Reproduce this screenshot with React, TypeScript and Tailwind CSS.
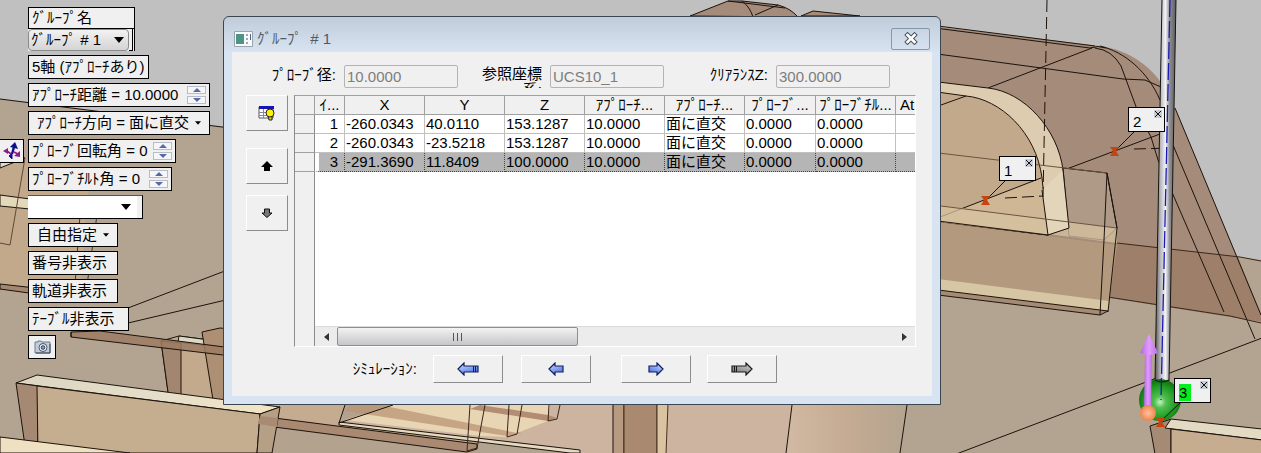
import type { ReactNode } from "react";

const box = "border border-black bg-[#f0f0f0]";
const raised =
  "flex items-center justify-center border border-t-white border-l-white border-r-[#8c8c8c] border-b-[#8c8c8c] bg-[#f0f0f0]";
const field =
  "h-[23px] w-[114px] rounded-xs border border-[#b4b4b4] bg-[#f0f0f0] px-0.5 text-[#7d7d7d] outline-none";

function Scene() {
  return (
    <svg className="absolute inset-0 h-full w-full" aria-hidden="true">
      <defs>
        <linearGradient id="rod" x1="0" x2="1">
          <stop offset="0" stopColor="#555" />
          <stop offset="0.25" stopColor="#b5b5b8" />
          <stop offset="0.5" stopColor="#f2f2f8" />
          <stop offset="0.7" stopColor="#8e8e92" />
          <stop offset="1" stopColor="#5c5c5c" />
        </linearGradient>
        <radialGradient id="ball" cx="0.5" cy="0.55" r="0.55">
          <stop offset="0" stopColor="#c4f5c4" />
          <stop offset="0.25" stopColor="#52c052" />
          <stop offset="0.7" stopColor="#1f9a22" />
          <stop offset="1" stopColor="#0c6c10" />
        </radialGradient>
        <radialGradient id="knob">
          <stop offset="0" stopColor="#ffc49c" />
          <stop offset="1" stopColor="#ee8450" />
        </radialGradient>
        <linearGradient id="bend" x1="0" x2="1">
          <stop offset="0" stopColor="#d2b9a3" />
          <stop offset="0.5" stopColor="#c5ab92" />
          <stop offset="1" stopColor="#b3a490" />
        </linearGradient>
        <linearGradient id="shaft" x1="0" x2="1">
          <stop offset="0" stopColor="#b266e0" />
          <stop offset="0.5" stopColor="#e29cff" />
          <stop offset="1" stopColor="#b870e4" />
        </linearGradient>
        <linearGradient id="rim" x1="0" x2="1">
          <stop offset="0" stopColor="#dcd6c2" />
          <stop offset="0.6" stopColor="#e6dfc9" />
          <stop offset="1" stopColor="#f3e6c3" />
        </linearGradient>
      </defs>
      <rect width="100%" height="100%" fill="#c0c0c0" />
      <path d="M0 99L230 128L1240 257L3000 480V2000H0Z" fill="#b3a491" />

      <g stroke="#1c130c" strokeWidth="1" fill="none">
        <path d="M0 99L230 128" />
        <path d="M0 168L24 159L90 168L80 293L0 284Z" fill="#c3a98c" stroke="none" />
        <path d="M0 195L60 203V212L0 206Z" fill="#e3d8ba" />
        <path d="M0 161L25 158L0 168Z" fill="#dfdccf" />
        <path d="M25 158L10 245L0 243" stroke="#5e4a38" />
        <path d="M0 284L80 293V300L0 289Z" fill="#a5876f" />
        <path d="M80 215L75 285M97 215L87 285" stroke="#4b3525" />
        <path d="M128 308L230 269M128 323L230 299" />
        <path d="M161 341L179 336L240 344V422L171 414Z" fill="#c3aa8d" />
        <path d="M161 341L181 343V407L171 414Z" fill="#a3866f" />
        <path d="M179 336L240 344V350L178 342Z" fill="#dcd8c6" />
        <path d="M202 332L220 328L240 330V403L213 400Z" fill="#ad8f73" />
        <path d="M71 332L100 331L240 349V357L71 337Z" fill="#9c7b62" fillOpacity="0.85" />
        <path d="M171 406L240 414V422L171 414Z" fill="#ad8f75" stroke="none" />
        <path d="M71 332V337" />
      </g>

      <g stroke="#1c130c" fill="none">
        <path d="M340 405H792L786 453H580L339 423Z" fill="#ccb4a1" stroke="none" />
        <path d="M265 405H400L340 422L480 440V453H265Z" fill="#b3a28e" stroke="none" />
        <path d="M270 405H345L339 423L470 440V450L270 422Z" fill="#c5ab8f" stroke="none" />
        <path d="M393 405H550L548 421L507 437L480 436L345 420Z" fill="#e8d5b3" stroke="none" />
        <path d="M350 405L345 411L507 436L517 434V431L522 434L380 405Z" fill="#b99473" fillOpacity="0.75" stroke="none" />
        <path d="M480 405L548 415L557 418L548 421L470 409Z" fill="#b28c73" stroke="none" />
        <path d="M220 411L477 444V449L467 452L220 420Z" fill="#a98972" />
        <path d="M339 422L580 450V453H570L339 425Z" fill="#e5dac0" />
        <path d="M345 405L339 423L393 405" />
        <path d="M470 405L467 451L477 448L485 405M509 405L507 437L517 434L522 405M549 405L548 421L557 419L560 405" stroke="#3a2518" />
        <path d="M37 375L280 407L260 414L16 383Z" fill="url(#rim)" />
        <path d="M16 383L38 386V453H26Z" fill="#a58972" />
        <path d="M37 386L260 414L257 453H38Z" fill="#c5ad90" />
        <path d="M260 414L280 407L272 453H257Z" fill="#b5a085" />
        <path d="M260 416L278 418L277 427L258 424Z" fill="#a98b73" stroke="none" />
        <path d="M0 437L130 453H38L26 453H0Z" fill="#eee0c0" />
        <path d="M613 404H624V454H613Z" fill="#b89a80" />
        <path d="M624 404H657V454H624Z" fill="#a98a71" stroke="#49301f" />
        <path d="M657 404H668L666 454H657Z" fill="#d9c3a1" stroke="#49301f" />
        <path d="M792 405H907L900 453H786Z" fill="url(#bend)" stroke="none" />
        <path d="M792 405L786 453M907 405L900 453" />
      </g>

      <g stroke="#1c130c" fill="none">
        <path d="M690 16L728 1L742 1L778 5Q790 8 798 17Z" fill="#a58b79" />
        <path d="M742 1Q750 7 753 17M755 15L778 5M728 1L785 8" />
        <path d="M801 16L813 11L860 16Z" fill="#a58b79" />

        <path d="M930 26L1100 46C1130 50 1152 68 1162 84L1175 108L1262 317V322L1110 298L930 275Z" fill="#a58b7a" stroke="none" />
        <path d="M1117 243L1238 257L1262 317V322L1110 298Z" fill="#9e806a" stroke="none" />
        <path d="M930 25L1095 46M935 28L1090 48M1090 48Q1098 45 1106 48M1095 48Q1112 50 1121 66L1138 112L1151 137L1158 160L1224 312" />
        <path d="M1100 46C1125 52 1148 72 1160 100M1175 108L1261 315" />
        <path d="M930 53L1123 79L1145 80L1161 87M988 88L1092 48M1064 170L1160 134M1173 145L1255 339" />
        <path d="M1117 243L1240 257L1261 261M1108 297L1230 316L1261 323" stroke="#3b271b" />

        <path d="M930 81L988 88C1025 92 1058 130 1063 170L1069 228L1048 235L930 221Z" fill="#deccb0" />
        <path d="M930 91L966 96C1000 99 1036 132 1042 178L1048 235L930 221Z" fill="#c3a98b" />
        <path d="M930 221L1041 178L1048 235Z" fill="#cfb795" stroke="none" />
        <path d="M941 105L966 96M935 219L1041 178" />
        <path d="M1063 168L1107 173L1117 228L1104 240L1069 236Z" fill="#ae9a86" />
        <path d="M930 221L1117 245L1109 302L930 280Z" fill="#b39a7e" stroke="none" />
        <path d="M930 204L1117 228V243L930 219Z" fill="#d7c3a0" fillOpacity="0.75" stroke="none" />
        <path d="M1042 190L1063 170L1069 228L1048 235Z" fill="#e3d5ba" stroke="none" />
        <path d="M1042 190L1048 235L1069 228L1063 170M930 220L1048 235" />
        <path d="M930 152L1107 173M941 206L1117 228" stroke="#6b5341" />
        <path d="M930 278L1109 301L1108 311L1100 315L930 294Z" fill="#d7c6a4" stroke="none" />
        <path d="M930 289L1108 311L1100 315L930 294Z" fill="#a58b74" />
        <path d="M1107 173L1117 228L1108 312" />
        <path d="M1107 173L1104 240L1100 315" />
        <path d="M930 464L1262 338" />
        <path d="M1047 0L1043 197M1005 198L1043 196M1134 149L1173 148" strokeDasharray="12 5" />
        <path d="M1150 426L1171 419V454H1155Z" fill="#a58a74" />
        <path d="M1171 419L1262 429V440L1165 428Z" fill="#e3dac3" />
        <path d="M1171 429L1262 440V454H1171Z" fill="#c6ad8f" />
      </g>

      <path d="M1162 -1H1176L1169 381H1155Z" fill="url(#rod)" stroke="#151515" />
      <circle cx="1160" cy="400" r="21" fill="url(#ball)" />
      <path d="M1155 380Q1162 384 1169 380" stroke="#111" fill="none" />
      <path d="M1170 0L1161 400" stroke="#1b1bb4" strokeWidth="1.3" strokeDasharray="17 4" />
      <path d="M1145 352H1152L1151 408H1144Z" fill="url(#shaft)" />
      <path d="M1149 334L1158 353Q1149 357 1140 353Z" fill="url(#shaft)" />
      <circle cx="1148" cy="413" r="8" fill="url(#knob)" />
      <path d="M1007 179L985 201M1135 131L1114 152M1181 402L1161 421" stroke="#111" />
      <g fill="#c8430f">
        <path d="M981 196H990L987 200L990 205H981L984 200Z" />
        <path d="M1110 147H1119L1116 151L1119 156H1110L1113 151Z" />
        <path d="M1156 418H1165L1162 422L1165 427H1156L1159 422Z" />
      </g>
    </svg>
  );
}

function Caret({ small = false }: { small?: boolean }) {
  return (
    <svg width={small ? 6 : 10} height={small ? 4 : 6} viewBox="0 0 10 6" className="pointer-events-none shrink-0" aria-hidden="true">
      <path d="M0 0H10L5 6Z" fill="#000" />
    </svg>
  );
}

function Stepper({ id, label, value, inputClass }: { id: string; label: string; value: string; inputClass: string }) {
  return (
    <>
      <label htmlFor={id} className="whitespace-pre">{label} = </label>
      <input id={id} defaultValue={value} className={`min-w-0 bg-transparent outline-none ${inputClass}`} />
      <span className="ml-auto flex flex-col gap-0.5">
        {["M0 4H8L4 0Z", "M0 0H8L4 4Z"].map((d, i) => (
          <button
            key={d}
            aria-label={`${label} ${i === 0 ? "+" : "-"}`}
            className="flex h-2 w-[19px] items-center justify-center border border-[#b9bcc6] bg-[#f6f6f8]"
          >
            <svg width="8" height="4" aria-hidden="true">
              <path d={d} fill="#5568a8" />
            </svg>
          </button>
        ))}
      </span>
    </>
  );
}

function Toolbar() {
  const row = `flex h-6 items-center whitespace-nowrap px-[3px] ${box}`;
  return (
    <div className="absolute top-[7px] left-0 flex flex-col items-start gap-1 pl-7">
      <div className="w-[107px]">
        <div className={`flex h-[22px] items-center px-[3px] ${box}`}>
          <label htmlFor="group">ｸﾞﾙｰﾌﾟ名</label>
        </div>
        <div className="flex h-[22px] border-r border-black bg-[#f0f0f0]">
          <div className="flex w-[101px] items-center rounded-sm border border-[#8a8a8a] bg-linear-to-b from-[#f2f2f2] to-[#d4d4d4] pr-1">
            <select id="group" className="min-w-0 flex-1 appearance-none bg-transparent pl-0.5 leading-4 outline-none">
              <option>ｸﾞﾙｰﾌﾟ # 1</option>
            </select>
            <Caret />
          </div>
          <div className="w-1 border-r border-b border-black" />
        </div>
      </div>
      <button className={`w-[121px] ${row}`}>5軸 (ｱﾌﾟﾛｰﾁあり)</button>
      <div className={`w-[182px] ${row}`}>
        <Stepper id="distance" label="ｱﾌﾟﾛｰﾁ距離" value="10.0000" inputClass="w-[58px]" />
      </div>
      <button className={`w-[182px] justify-between pr-2 pl-2 ${row}`}>
        ｱﾌﾟﾛｰﾁ方向 = 面に直交 <Caret small />
      </button>
      <div className="-ml-7 flex gap-1">
        <button aria-label="軸" className={`flex h-6 w-6 items-center justify-center border-l-0 ${box}`}>
          <svg width="18" height="18" viewBox="0 0 18 18" aria-hidden="true">
            <path d="M9 12L11 5" stroke="#10108c" strokeWidth="2.400" />
            <path d="M12 0L15 7L7 5Z" fill="#10108c" />
            <path d="M9 11L9 17L6 14Z" fill="#10108c" stroke="#10108c" />
            <path d="M8 12L4 9M11 10L15 12" stroke="#8a1c8a" strokeWidth="1.600" />
            <path d="M0 9L5 6L5 12ZM17 9L17 15L11 14Z" fill="#8a1c8a" />
          </svg>
        </button>
        <div className={`w-[148px] ${row}`}>
          <Stepper id="rotation" label="ﾌﾟﾛｰﾌﾞ回転角" value="0" inputClass="w-[10px]" />
        </div>
      </div>
      <div className={`w-[144px] ${row}`}>
        <Stepper id="tilt" label="ﾌﾟﾛｰﾌﾞﾁﾙﾄ角" value="0" inputClass="w-[10px]" />
      </div>
      <div className="flex h-6 w-[115px] border-t border-r border-b border-t-[#555] border-r-black border-b-black bg-[#f0f0f0]">
        <div className="flex w-[109px] items-center bg-white pr-1.5">
          <select aria-label="選択" className="min-w-0 flex-1 appearance-none bg-transparent outline-none">
            <option></option>
          </select>
          <Caret />
        </div>
      </div>
      <button className={`w-[90px] justify-between pr-2 pl-2 ${row}`}>
        自由指定 <Caret small />
      </button>
      <button className={`w-[90px] ${row}`}>番号非表示</button>
      <button className={`w-[90px] ${row}`}>軌道非表示</button>
      <button className={`w-[101px] ${row}`}>ﾃｰﾌﾞﾙ非表示</button>
      <button aria-label="カメラ" className={`w-7 justify-center ${row}`}>
        <svg width="17" height="14" viewBox="0 0 17 14" className="shrink-0" aria-hidden="true">
          <path d="M1 2H4V1H7L8 2H16V13H1Z" fill="#c4ccd8" stroke="#6d7a8e" />
          <path d="M2 13H16V4" stroke="#3b485c" fill="none" />
          <circle cx="9" cy="7.500" r="4" fill="#eef2f7" stroke="#45556e" />
          <circle cx="9" cy="7.500" r="1.800" fill="#8fa2be" stroke="#2d3b52" />
        </svg>
      </button>
    </div>
  );
}

function Arrow({ long = false, right = false, tone }: { long?: boolean; right?: boolean; tone: "blue" | "gray" }) {
  const dark = tone === "blue" ? "#14205c" : "#1c1c1c";
  const w = long ? 22 : 16;
  return (
    <svg width={w} height="14" viewBox={`0 0 ${w} 14`} className={right ? "-scale-x-100" : ""} aria-hidden="true">
      <defs>
        <linearGradient id={`arrow-${tone}`} x1="0" x2="0.6" y2="1">
          <stop offset="0" stopColor={tone === "blue" ? "#d4e6ff" : "#d5d5d5"} />
          <stop offset="1" stopColor={tone === "blue" ? "#4c70e6" : "#7a7a7a"} />
        </linearGradient>
      </defs>
      <path
        d={long ? "M1 7L7 1V4H21V10H7V13Z" : "M1 7L7 1V4H15V10H7V13Z"}
        fill={`url(#arrow-${tone})`}
        stroke={dark}
        strokeWidth="1.200"
      />
      {long && <path d="M16.500 4V10M18.500 4V10" stroke={dark} />}
    </svg>
  );
}

const columns = ["ｲ...", "X", "Y", "Z", "ｱﾌﾟﾛｰﾁ...", "ｱﾌﾟﾛｰﾁ...", "ﾌﾟﾛｰﾌﾞ...", "ﾌﾟﾛｰﾌﾞﾁﾙ...", "At"];
const rows = [
  ["1", "-260.0343", "40.0110", "153.1287", "10.0000", "面に直交", "0.0000", "0.0000", ""],
  ["2", "-260.0343", "-23.5218", "153.1287", "10.0000", "面に直交", "0.0000", "0.0000", ""],
  ["3", "-291.3690", "11.8409", "100.0000", "10.0000", "面に直交", "0.0000", "0.0000", ""],
];

function PointTable() {
  return (
    <div className="flex h-[252px] min-w-0 flex-1 flex-col border border-t-[#a0a0a0] border-l-[#8c8c8c] border-r-white border-b-white bg-white">
      <table className="w-full table-fixed border-separate border-spacing-0">
        <colgroup>
          <col className="w-5" />
          <col className="w-[30px]" />
          <col className="w-20" />
          <col className="w-20" />
          <col className="w-20" />
          <col className="w-20" />
          <col className="w-20" />
          <col className="w-[71px]" />
          <col className="w-20" />
          <col />
        </colgroup>
        <thead>
          <tr className="h-[19px] bg-[#f0f0f0]">
            <td className="border-r border-b border-[#a0a0a0] p-0" />
            {columns.map((c, i) => (
              <th
                key={i}
                scope="col"
                className={`overflow-hidden border-b border-[#a0a0a0] p-0 text-center leading-[18px] font-normal whitespace-nowrap ${i === 8 ? "pl-1 text-left" : "border-r"}`}
              >
                {c}
              </th>
            ))}
          </tr>
        </thead>
        <tbody>
          {rows.map((r, n) => (
            <tr key={n} className={n === 2 ? "h-[19px] bg-[#b5b5b5]" : "h-[19px]"}>
              <td className="border-r border-b border-r-[#8c8c8c] border-b-[#a0a0a0] bg-[#f0f0f0] p-0" />
              {r.map((v, i) => (
                <td
                  key={i}
                  className={`overflow-hidden p-0 pl-px leading-[18px] whitespace-nowrap ${i === 0 ? "pr-1.5 text-right" : ""} ${
                    n === 2 ? "border-b border-dotted border-[#444]" : "border-b border-[#c0c0c0]"
                  } ${i === 8 ? "" : "border-r"} ${n === 2 && i === 0 ? "border-l-4 border-l-white [border-left-style:solid]" : ""}`}
                >
                  {v}
                </td>
              ))}
            </tr>
          ))}
        </tbody>
      </table>
      <div className="flex flex-1">
        <div className="w-5 border-r border-[#8c8c8c] bg-[#f0f0f0]" />
        <div className="flex flex-1 flex-col justify-end">
          <div className="flex h-5 items-center border-t border-[#dcdcdc] bg-[#ececec]">
            <button aria-label="左へ" className="flex w-[22px] justify-center">
              <svg width="5" height="8" aria-hidden="true"><path d="M5 0V8L0 4Z" fill="#333" /></svg>
            </button>
            <div className="flex h-[19px] w-[241px] items-center justify-center gap-[3px] rounded-xs border border-[#8e8e8e] bg-linear-to-b from-[#f3f3f3] via-[#dcdcde] to-[#c6c6ca]">
              <i className="h-2 w-px bg-[#555]" />
              <i className="h-2 w-px bg-[#555]" />
              <i className="h-2 w-px bg-[#555]" />
            </div>
            <button aria-label="右へ" className="ml-auto flex w-[22px] justify-center">
              <svg width="5" height="8" aria-hidden="true"><path d="M0 0V8L5 4Z" fill="#333" /></svg>
            </button>
          </div>
        </div>
      </div>
    </div>
  );
}

function GroupDialog() {
  return (
    <section
      aria-label="ｸﾞﾙｰﾌﾟ # 1"
      className="absolute top-4 left-[223px] w-[718px] rounded-t-md border border-[#3c4650] bg-[#d8e4f1] bg-linear-to-b from-[#c1ccdb] to-[#d8e4f1] to-[36px] px-2 pb-2"
    >
      <header className="flex h-[35px] items-center pt-2 pl-0.5 text-[#4b5b6c]">
        <svg width="19" height="16" viewBox="0 0 19 16" aria-hidden="true">
          <path d="M0.500 0.500H18.500V15.500H0.500Z" fill="#f8fafb" stroke="#98a5b0" />
          <path d="M2 3H10V13H2Z" fill="#4d9486" />
          <path d="M12 4H14M12 8H14M12 12H14" stroke="#9aaab2" strokeWidth="2" />
          <path d="M16.500 3V9" stroke="#4b6878" />
        </svg>
        <h1 className="ml-1 whitespace-pre">ｸﾞﾙｰﾌﾟ  # 1</h1>
        <button aria-label="閉じる" className="mr-0.5 ml-auto flex h-[22px] w-[39px] items-center justify-center rounded-xs border border-[#8797ac]">
          <svg width="14" height="13" viewBox="0 0 14 13" aria-hidden="true">
            <path d="M3.500 3L10.500 10M10.500 3L3.500 10" stroke="#4d5663" strokeWidth="4.600" strokeLinecap="square" />
            <path d="M3.500 3L10.500 10M10.500 3L3.500 10" stroke="#fff" strokeWidth="2.600" strokeLinecap="square" />
          </svg>
        </button>
      </header>
      <div className="bg-[#f0f0f0] pt-[13px] pb-[13px]">
        <div className="flex items-start">
          <label htmlFor="dia" className="mr-2 w-[104px] text-right leading-5">ﾌﾟﾛｰﾌﾞ径:</label>
          <input id="dia" disabled defaultValue="10.0000" className={field} />
          <label htmlFor="ucs" className="mt-px mr-2 ml-6 h-[22px] w-[60px] overflow-hidden text-right leading-4 break-all">参照座標系:</label>
          <input id="ucs" disabled defaultValue="UCS10_1" className={field} />
          <label htmlFor="clear" className="mr-2 ml-[34px] w-[70px] text-right leading-5">ｸﾘｱﾗﾝｽZ:</label>
          <input id="clear" disabled defaultValue="300.0000" className={field} />
        </div>
        <div className="mt-[7px] flex gap-1.5 pr-4 pl-3.5">
          <div className="flex w-[42px] flex-col">
            <button aria-label="表の設定" className={`h-9 ${raised}`}>
              <svg width="18" height="16" viewBox="0 0 18 16" aria-hidden="true">
                <path d="M1 2H15V13H1Z" fill="#fff" stroke="#556" />
                <path d="M1 1H16V4H1Z" fill="#1414b8" />
                <path d="M1 7.500H10M1 10.500H10M5.500 4V13" stroke="#889" />
                <path d="M10 11H14V15H11Z" fill="#ddd100" stroke="#222" />
                <circle cx="12" cy="8" r="4" fill="#fff200" stroke="#222" />
              </svg>
            </button>
            <button aria-label="上へ" className={`mt-[17px] h-9 ${raised}`}>
              <svg width="12" height="10" aria-hidden="true"><path d="M6 0L12 6H9V10H3V6H0Z" fill="#000" /></svg>
            </button>
            <button aria-label="下へ" className={`mt-[11px] h-9 ${raised}`}>
              <svg width="12" height="10" viewBox="0 0 12 10" aria-hidden="true">
                <path d="M6 9.500L11 5H8.500V1H3.500V5H1Z" fill="#777" stroke="#111" />
              </svg>
            </button>
          </div>
          <PointTable />
        </div>
        <div className="mt-2 flex items-center">
          <span className="mr-4 w-[185px] text-right">ｼﾐｭﾚｰｼｮﾝ:</span>
          <button aria-label="最初" className={`h-7 w-[70px] ${raised}`}><Arrow long tone="blue" /></button>
          <button aria-label="前" className={`ml-[18px] h-7 w-[70px] ${raised}`}><Arrow tone="blue" /></button>
          <button aria-label="次" className={`ml-[30px] h-7 w-[70px] ${raised}`}><Arrow right tone="blue" /></button>
          <button aria-label="最後" className={`ml-4 h-7 w-[70px] ${raised}`}><Arrow long right tone="gray" /></button>
        </div>
      </div>
    </section>
  );
}

function Pin({ place, children }: { place: string; children: ReactNode }) {
  return (
    <div className={`absolute flex h-[25px] w-[37px] items-start justify-between pt-0.5 pr-0.5 pl-1 ${box} ${place}`}>
      <span className="pt-1 leading-4">{children}</span>
      <button aria-label="閉じる" className="flex bg-[#c8ccd4]">
        <svg width="8" height="8" aria-hidden="true"><path d="M1 1L7 7M7 1L1 7" stroke="#111" /></svg>
      </button>
    </div>
  );
}

export default function App() {
  return (
    <main className="relative min-h-screen overflow-hidden bg-[#c0c0c0] font-['Liberation_Sans','Noto_Sans_CJK_JP',sans-serif] text-[15px] leading-5 text-black">
      <Scene />
      <Toolbar />
      <GroupDialog />
      <Pin place="top-[156px] left-[999px]">1</Pin>
      <Pin place="top-[107px] left-[1128px]">2</Pin>
      <Pin place="top-[378px] left-[1174px]">
        <mark className="bg-[#00f01c] pr-1 text-black">3</mark>
      </Pin>
    </main>
  );
}
